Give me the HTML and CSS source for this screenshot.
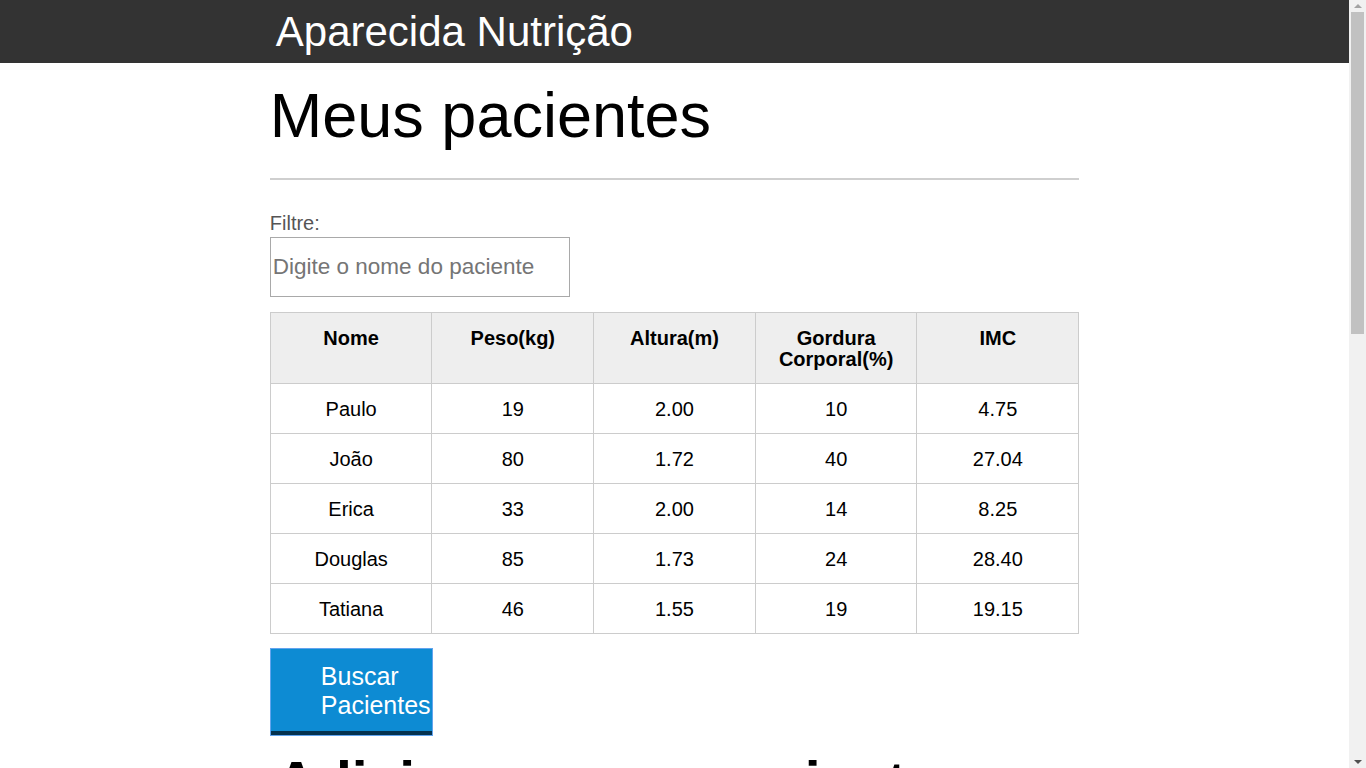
FILE: index.html
```html
<!DOCTYPE html>
<html lang="pt-BR">
<head>
<meta charset="utf-8">
<title>Aparecida Nutrição</title>
<link rel="stylesheet" href="styles.css">
</head>
<body>
<div class="pagina">
  <header class="topo">
    <div class="container">
      <h1 class="marca">Aparecida Nutrição</h1>
    </div>
  </header>
  <main class="container">
    <section class="pacientes">
      <h2 class="titulo">Meus pacientes</h2>
      <hr class="divisor">
      <label class="rotulo rotulo-filtro" for="filtrar-tabela">Filtre:</label>
      <input class="campo-filtro" id="filtrar-tabela" type="text" placeholder="Digite o nome do paciente">
      <table class="tabela">
        <thead>
          <tr>
            <th>Nome</th>
            <th>Peso(kg)</th>
            <th>Altura(m)</th>
            <th>Gordura Corporal(%)</th>
            <th>IMC</th>
          </tr>
        </thead>
        <tbody>
          <tr><td>Paulo</td><td>19</td><td>2.00</td><td>10</td><td>4.75</td></tr>
          <tr><td>João</td><td>80</td><td>1.72</td><td>40</td><td>27.04</td></tr>
          <tr><td>Erica</td><td>33</td><td>2.00</td><td>14</td><td>8.25</td></tr>
          <tr><td>Douglas</td><td>85</td><td>1.73</td><td>24</td><td>28.40</td></tr>
          <tr><td>Tatiana</td><td>46</td><td>1.55</td><td>19</td><td>19.15</td></tr>
        </tbody>
      </table>
      <button class="botao botao-buscar" type="button">Buscar Pacientes</button>
    </section>
    <section class="adicionar">
      <h2 class="titulo-form">Adicionar novo paciente</h2>
      <form class="formulario">
        <div class="grupo">
          <label class="rotulo" for="nome">Nome:</label>
          <input class="campo" id="nome" type="text" placeholder="digite o nome do seu paciente">
        </div>
        <div class="grupo">
          <label class="rotulo" for="peso">Peso:</label>
          <input class="campo" id="peso" type="text" placeholder="digite o peso do seu paciente">
        </div>
        <div class="grupo">
          <label class="rotulo" for="altura">Altura:</label>
          <input class="campo" id="altura" type="text" placeholder="digite a altura do seu paciente">
        </div>
        <div class="grupo">
          <label class="rotulo" for="gordura">% de Gordura:</label>
          <input class="campo" id="gordura" type="text" placeholder="digite a porcentagem de gordura do seu paciente">
        </div>
        <button class="botao botao-adicionar" type="button">Adicionar</button>
      </form>
    </section>
  </main>
</div>
<div class="barra-rolagem" aria-hidden="true">
  <div class="seta seta-cima"></div>
  <div class="polegar"></div>
  <div class="seta seta-baixo"></div>
</div>
</body>
</html>
```

FILE: styles.css
```css
html, body {
  margin: 0;
  padding: 0;
}

body {
  font-family: "Liberation Sans", Arial, sans-serif;
  color: #000;
  background: #fff;
}

.pagina {
  margin-right: 17px;
}

.container {
  width: 60%;
  margin: 0 auto;
}

.topo {
  background: #333;
  height: 63px;
}

.marca {
  margin: 0;
  padding: 8px 0 0 6px;
  font-size: 42px;
  font-weight: normal;
  line-height: 48px;
  color: #fff;
}

.titulo {
  margin: 15px 0 0 0;
  font-size: 63px;
  font-weight: normal;
  line-height: 74px;
}

.divisor {
  margin: 26px 0 0 0;
  border: 0;
  height: 2px;
  background: #cfcfcf;
}

.rotulo {
  display: block;
  font-size: 20px;
  line-height: 23px;
  color: #555;
}

.rotulo-filtro {
  margin-top: 32px;
}

.campo-filtro {
  display: block;
  box-sizing: border-box;
  width: 300px;
  height: 60px;
  margin-top: 2px;
  padding: 0 2px;
  border: 1px solid #a9a9a9;
  font-family: "Liberation Sans", Arial, sans-serif;
  font-size: 22.5px;
  color: #000;
}

.campo-filtro::placeholder,
.campo::placeholder {
  color: #757575;
}

.tabela {
  width: 100%;
  margin-top: 15px;
  border-collapse: collapse;
  table-layout: fixed;
  font-size: 20px;
  line-height: 21px;
}

.tabela th,
.tabela td {
  border: 1px solid #ccc;
  padding: 15px 10px 13px;
  text-align: center;
  vertical-align: top;
}

.tabela thead {
  background: #eee;
}

.tabela th {
  font-weight: bold;
}

.botao {
  display: block;
  box-sizing: border-box;
  margin: 15px 0 0 1px;
  border: 0;
  border-bottom: 4px solid #04324f;
  outline: 1px solid #62a4ee;
  background: #0d8bd3;
  color: #fff;
  font-family: "Liberation Sans", Arial, sans-serif;
  font-size: 25px;
  line-height: 28.7px;
  text-align: left;
  cursor: pointer;
}

.botao-buscar {
  width: 161px;
  height: 86px;
  padding: 13px 0 12px 50px;
}

.titulo-form {
  margin: 14px 0 0 6px;
  font-size: 57px;
  font-weight: bold;
  line-height: 67px;
}

.formulario {
  padding-bottom: 220px;
}

.grupo {
  margin-top: 30px;
}

.campo {
  display: block;
  box-sizing: border-box;
  width: 100%;
  height: 60px;
  margin-top: 4px;
  padding: 0 8px;
  border: 1px solid #a9a9a9;
  font-family: "Liberation Sans", Arial, sans-serif;
  font-size: 22px;
}

.botao-adicionar {
  margin-top: 40px;
  padding: 14px 50px;
}

/* imitation of the browser's vertical scrollbar */
.barra-rolagem {
  position: fixed;
  top: 0;
  right: 0;
  width: 17px;
  height: 100vh;
  background: #f1f1f1;
  display: flex;
  flex-direction: column;
  align-items: center;
}

.seta {
  flex: none;
  width: 0;
  height: 0;
  border-left: 4px solid transparent;
  border-right: 4px solid transparent;
}

.seta-cima {
  margin-top: 4px;
  border-bottom: 4px solid #a3a3a3;
}

.polegar {
  flex: none;
  width: 13px;
  height: 322px;
  margin-top: 4px;
  background: #c1c1c1;
}

.seta-baixo {
  margin-top: auto;
  margin-bottom: 4px;
  border-top: 4px solid #505050;
}
```
